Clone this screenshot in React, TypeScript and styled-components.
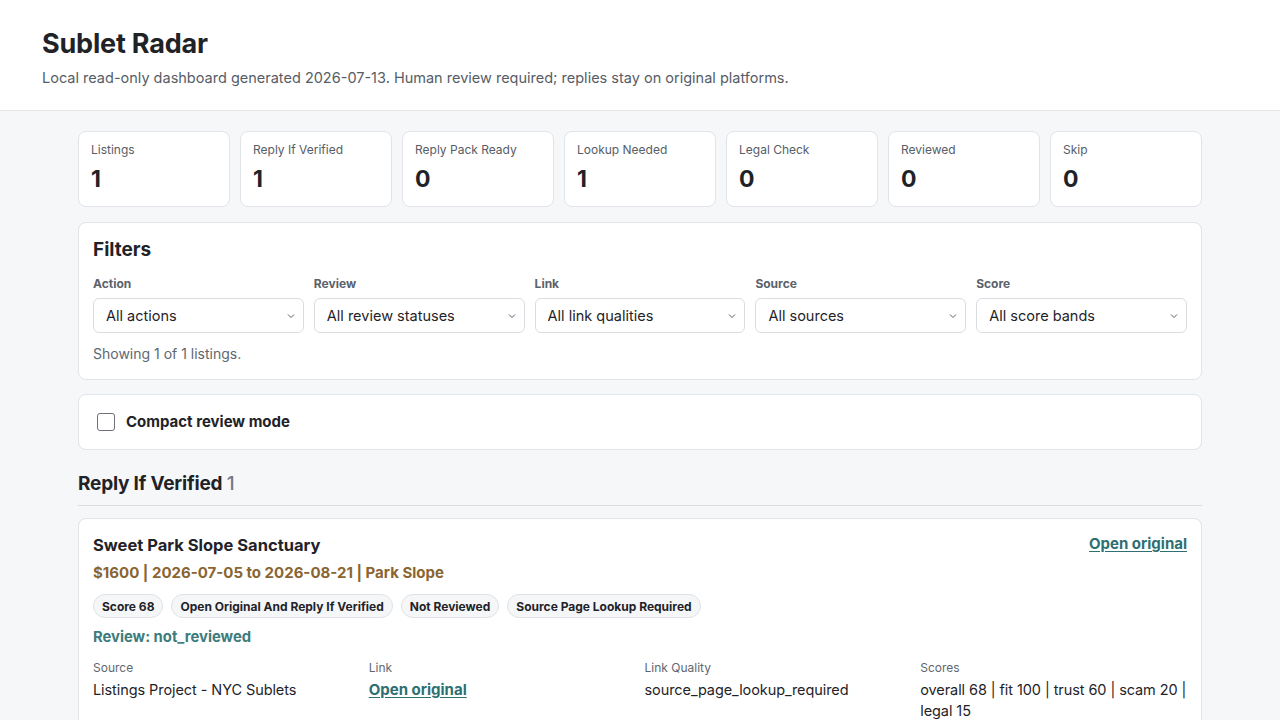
import React from "react";
import styled, { createGlobalStyle } from "styled-components";

const GlobalStyle = createGlobalStyle`
  * { box-sizing: border-box; }
  html, body { margin: 0; padding: 0; }
  body {
    background: #f6f7f9;
    color: #1f2328;
    font-family: Inter, "Noto Sans", "Liberation Sans", sans-serif;
    -webkit-font-smoothing: antialiased;
  }
`;

const Header = styled.header`
  background: #ffffff;
  border-bottom: 1px solid #e3e5e8;
  padding: 27px 42px 21px;
`;

const Title = styled.h1`
  margin: 0;
  font-size: 27px;
  line-height: 34px;
  font-weight: 700;
  color: #1f2328;
  letter-spacing: -0.2px;
`;

const Subtitle = styled.p`
  margin: 6px 0 0;
  font-size: 14.5px;
  line-height: 22px;
  color: #565d66;
`;

const Main = styled.main`
  max-width: 1124px;
  margin: 0 auto;
  padding: 20px 0 40px;
  display: flex;
  flex-direction: column;
`;

const StatGrid = styled.div`
  display: grid;
  grid-template-columns: repeat(7, 1fr);
  gap: 10px;
  margin-bottom: 15px;
`;

const StatCard = styled.div`
  background: #ffffff;
  border: 1px solid #e1e4e8;
  border-radius: 8px;
  padding: 10px 12px 12px;
`;

const StatLabel = styled.div`
  font-size: 12px;
  line-height: 16px;
  color: #565d66;
`;

const StatValue = styled.div`
  margin-top: 6px;
  font-size: 23px;
  line-height: 30px;
  font-weight: 700;
  color: #1f2328;
`;

const Panel = styled.section<{ $pad?: string }>`
  background: #ffffff;
  border: 1px solid #e1e4e8;
  border-radius: 8px;
  padding: ${(p) => p.$pad ?? "14px 14px 15px"};
  margin-bottom: 14px;
`;

const PanelTitle = styled.h2`
  margin: 0;
  font-size: 19px;
  line-height: 26px;
  font-weight: 700;
  color: #1f2328;
`;

const FilterGrid = styled.div`
  display: grid;
  grid-template-columns: repeat(5, 1fr);
  gap: 10px;
  margin-top: 13px;
`;

const Field = styled.label`
  display: flex;
  flex-direction: column;
  gap: 6px;
`;

const FieldLabel = styled.span`
  font-size: 12px;
  line-height: 16px;
  font-weight: 700;
  color: #5b626b;
`;

const SelectWrap = styled.span`
  position: relative;
  display: block;
`;

const Select = styled.select`
  appearance: none;
  -webkit-appearance: none;
  width: 100%;
  height: 35px;
  padding: 0 28px 0 12px;
  border: 1px solid #d9dde2;
  border-radius: 6px;
  background: #ffffff;
  font-family: inherit;
  font-size: 14.5px;
  color: #1f2328;
`;

const Chevron = styled.svg`
  position: absolute;
  right: 9px;
  top: 50%;
  width: 8px;
  height: 8px;
  margin-top: -4px;
  pointer-events: none;
`;

const Showing = styled.p`
  margin: 11px 0 0;
  font-size: 14px;
  line-height: 20px;
  color: #60676f;
`;

const CheckRow = styled.label`
  display: flex;
  align-items: center;
  gap: 11px;
  padding-left: 4px;
  font-size: 15px;
  line-height: 18px;
  font-weight: 700;
  color: #1f2328;
`;

const Checkbox = styled.input`
  appearance: none;
  -webkit-appearance: none;
  width: 18px;
  height: 18px;
  margin: 0;
  border: 1px solid #6b7079;
  border-radius: 3px;
  background: #ffffff;
`;

const SectionHeading = styled.h2`
  margin: 7px 0 12px;
  padding-bottom: 8px;
  border-bottom: 1px solid #d9dde2;
  font-size: 19px;
  line-height: 26px;
  font-weight: 700;
  color: #1f2328;
  letter-spacing: -0.2px;
`;

const Count = styled.span`
  font-weight: 500;
  color: #737a83;
`;

const ListingCard = styled.article`
  background: #ffffff;
  border: 1px solid #e1e4e8;
  border-radius: 8px;
  padding: 14px 14px 16px;
`;

const CardTop = styled.div`
  display: flex;
  justify-content: space-between;
  align-items: flex-start;
`;

const ListingTitle = styled.h3`
  margin: 0;
  font-size: 16.5px;
  line-height: 24px;
  font-weight: 700;
  color: #1f2328;
`;

const OriginalLink = styled.a`
  font-size: 15px;
  line-height: 22px;
  font-weight: 700;
  color: #2e6f72;
  text-decoration: underline;
  text-underline-offset: 2px;
  letter-spacing: 0;
`;

const Meta = styled.div`
  margin-top: 6px;
  font-size: 15px;
  line-height: 20px;
  font-weight: 700;
  color: #8a6530;
`;

const ChipRow = styled.div`
  display: flex;
  flex-wrap: wrap;
  gap: 8px;
  margin-top: 11px;
`;

const Chip = styled.span`
  display: inline-flex;
  align-items: center;
  height: 24px;
  padding: 0 8px;
  border: 1px solid #dfe2e6;
  border-radius: 12px;
  background: #f5f6f8;
  font-size: 12px;
  font-weight: 700;
  color: #1f2328;
`;

const ReviewLine = styled.div`
  margin-top: 9px;
  font-size: 14.8px;
  line-height: 20px;
  font-weight: 700;
  color: #3d7c7a;
`;

const DetailGrid = styled.dl`
  display: grid;
  grid-template-columns: repeat(4, 1fr);
  gap: 9px;
  margin: 13px 0 0;
`;

const Detail = styled.div`
  display: flex;
  flex-direction: column;
  gap: 3px;
`;

const DetailLabel = styled.dt`
  font-size: 12px;
  line-height: 16px;
  color: #60676f;
`;

const DetailValue = styled.dd`
  margin: 0;
  font-size: 14.5px;
  line-height: 21px;
  color: #1f2328;
  letter-spacing: -0.08px;
`;

const stats = [
  { label: "Listings", value: 1 },
  { label: "Reply If Verified", value: 1 },
  { label: "Reply Pack Ready", value: 0 },
  { label: "Lookup Needed", value: 1 },
  { label: "Legal Check", value: 0 },
  { label: "Reviewed", value: 0 },
  { label: "Skip", value: 0 },
];

const filters = [
  { label: "Action", option: "All actions" },
  { label: "Review", option: "All review statuses" },
  { label: "Link", option: "All link qualities" },
  { label: "Source", option: "All sources" },
  { label: "Score", option: "All score bands" },
];

const chips = [
  "Score 68",
  "Open Original And Reply If Verified",
  "Not Reviewed",
  "Source Page Lookup Required",
];

function FilterSelect({ label, option }: { label: string; option: string }) {
  return (
    <Field>
      <FieldLabel>{label}</FieldLabel>
      <SelectWrap>
        <Select defaultValue="all">
          <option value="all">{option}</option>
        </Select>
        <Chevron viewBox="0 0 8 8">
          <path d="M1 2.5 L4 5.5 L7 2.5" fill="none" stroke="#555b63" strokeWidth="1" />
        </Chevron>
      </SelectWrap>
    </Field>
  );
}

export default function App() {
  return (
    <>
      <GlobalStyle />
      <Header>
        <Title>Sublet Radar</Title>
        <Subtitle>
          Local read-only dashboard generated 2026-07-13. Human review required; replies stay on
          original platforms.
        </Subtitle>
      </Header>
      <Main>
        <StatGrid>
          {stats.map((s) => (
            <StatCard key={s.label}>
              <StatLabel>{s.label}</StatLabel>
              <StatValue>{s.value}</StatValue>
            </StatCard>
          ))}
        </StatGrid>

        <Panel>
          <PanelTitle>Filters</PanelTitle>
          <FilterGrid>
            {filters.map((f) => (
              <FilterSelect key={f.label} label={f.label} option={f.option} />
            ))}
          </FilterGrid>
          <Showing>Showing 1 of 1 listings.</Showing>
        </Panel>

        <Panel $pad="18px 14px">
          <CheckRow>
            <Checkbox type="checkbox" />
            Compact review mode
          </CheckRow>
        </Panel>

        <SectionHeading>
          Reply If Verified <Count>1</Count>
        </SectionHeading>

        <ListingCard>
          <CardTop>
            <ListingTitle>Sweet Park Slope Sanctuary</ListingTitle>
            <OriginalLink href="#">Open original</OriginalLink>
          </CardTop>
          <Meta>$1600 | 2026-07-05 to 2026-08-21 | Park Slope</Meta>
          <ChipRow>
            {chips.map((c) => (
              <Chip key={c}>{c}</Chip>
            ))}
          </ChipRow>
          <ReviewLine>Review: not_reviewed</ReviewLine>
          <DetailGrid>
            <Detail>
              <DetailLabel>Source</DetailLabel>
              <DetailValue>Listings Project - NYC Sublets</DetailValue>
            </Detail>
            <Detail>
              <DetailLabel>Link</DetailLabel>
              <DetailValue>
                <OriginalLink href="#">Open original</OriginalLink>
              </DetailValue>
            </Detail>
            <Detail>
              <DetailLabel>Link Quality</DetailLabel>
              <DetailValue>source_page_lookup_required</DetailValue>
            </Detail>
            <Detail>
              <DetailLabel>Scores</DetailLabel>
              <DetailValue>overall 68 | fit 100 | trust 60 | scam 20 | legal 15</DetailValue>
            </Detail>
          </DetailGrid>
        </ListingCard>
      </Main>
    </>
  );
}
